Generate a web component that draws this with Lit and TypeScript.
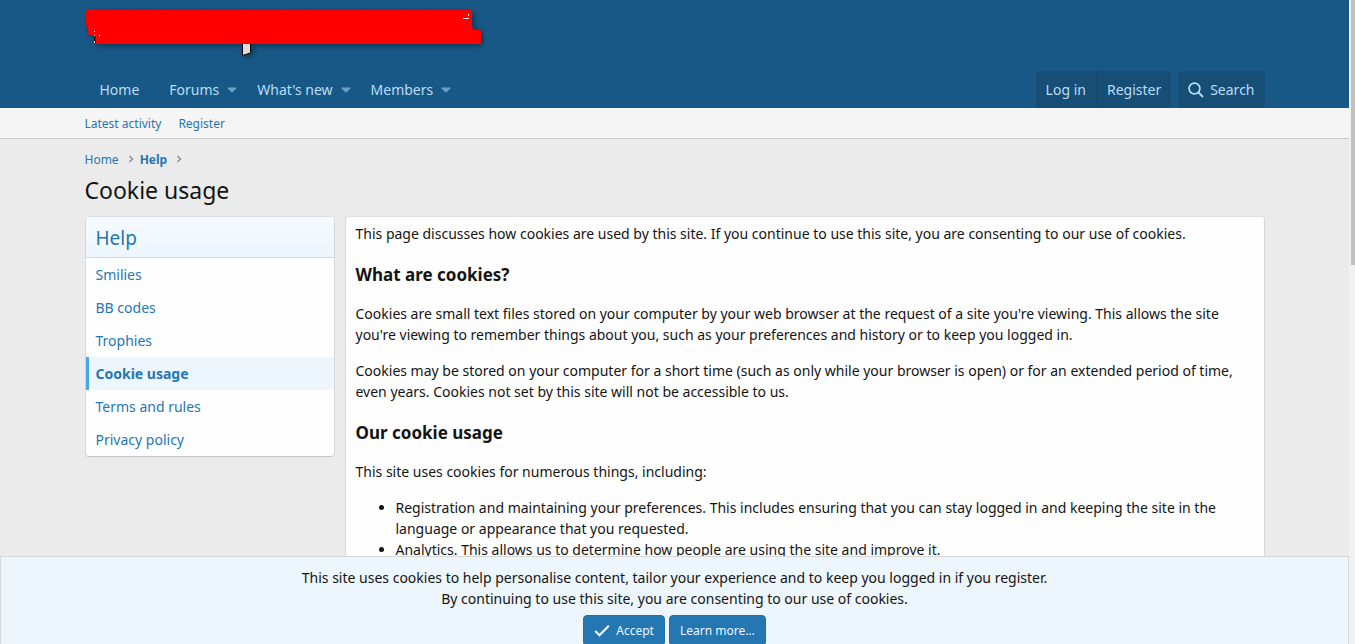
import { LitElement, html, css, svg } from "lit";
import { customElement } from "lit/decorators.js";

const chevron = svg`<svg class="chevron" viewBox="0 0 6 8" aria-hidden="true"><path d="M1.4 .9 4.6 4 1.4 7.1" fill="none" stroke="currentColor" stroke-width="1.4"/></svg>`;
const caret = svg`<svg class="caret" viewBox="0 0 10 6" aria-hidden="true"><path d="M1 .5h8a.5.5 0 0 1 .4.9L5.5 5.3a.7.7 0 0 1-1 0L.6 1.4A.5.5 0 0 1 1 .5Z" fill="currentColor"/></svg>`;

@customElement("app-root")
export class AppRoot extends LitElement {
  static styles = css`
    :host {
      display: grid;
      grid-template-columns: minmax(0, 1fr) 6px;
      height: 100vh;
      overflow: hidden;
      background: #ebebeb;
      color: #141414;
      font: 14px/21px "Segoe UI", "Noto Sans", "Open Sans", sans-serif;
    }
    * { box-sizing: border-box; }
    a { color: #2577b1; text-decoration: none; }
    a:hover { text-decoration: underline; }
    p, h1, h2, h3, ul { margin: 0; }

    .page { display: flex; flex-direction: column; min-height: 0; height: 100vh; }
    .view { flex: 1; min-height: 0; overflow: hidden; }
    .inner { max-width: 1200px; margin: 0 auto; padding: 0 10px; }

    .header { background: #185886; }
    .brand { height: 71px; padding-top: 8px; }
    .logo { display: block; width: 400px; height: 52px; }

    .nav { display: flex; align-items: flex-end; }
    .tabs { display: flex; flex: 1; padding-left: 5px; }
    .tab, .op {
      display: flex;
      align-items: center;
      height: 37px;
      color: #b8ddf6;
    }
    .tab { padding: 0 10px; }
    .tab.menu { padding-right: 0; }
    .tab.first { margin-right: 10px; }
    .tab.menu + .tab { margin-left: 5px; }
    .caret { width: 10px; height: 6px; margin: 0 5px 0 8px; color: #6a9fc4; }
    .ops { display: flex; gap: 7px; }
    .group { display: flex; border-radius: 4px 4px 0 0; background: #174e76; overflow: hidden; }
    .op { padding: 0 10px; }
    .op + .op { border-left: 1px solid #174565; }
    .glass { width: 16px; height: 16px; margin-right: 6px; }

    .subnav { background: #f5f5f5; border-bottom: 1px solid #cbcbcb; }
    .sublinks { display: flex; gap: 17px; height: 30px; align-items: center; font-size: 12px; }

    .crumbs {
      display: flex;
      align-items: center;
      height: 20px;
      margin: 10px 0 5px;
      padding: 0;
      list-style: none;
      font-size: 12px;
    }
    .crumbs li { display: flex; align-items: center; }
    .here { font-weight: 700; }
    .chevron { width: 6px; height: 8px; margin: 0 6px 0 9px; color: #8c8c8c; }
    .title { font-size: 23px; line-height: 32px; font-weight: 400; margin-bottom: 10px; }

    .columns { display: grid; grid-template-columns: 250px minmax(0, 1fr); gap: 10px; align-items: start; }
    .block {
      background: #fefefe;
      border: 1px solid #d8d8d8;
      border-top-color: #e0e0e0;
      border-bottom-color: #c5c5c5;
      border-radius: 4px;
      overflow: hidden;
    }
    .side-title {
      padding: 7px 10px 5px;
      font-size: 19px;
      line-height: 28px;
      font-weight: 400;
      color: #2577b1;
      background: linear-gradient(#f5faff, #edf6fd);
      border-bottom: 1px solid #d8d8d8;
    }
    .side-link { display: block; padding: 6px 10px; }
    .side-link.active {
      padding-left: 7px;
      border-left: 3px solid #47a7eb;
      background: #edf6fd;
      font-weight: 700;
    }

    .body { padding: 6px 10px; }
    .body p { margin-bottom: 15px; }
    .body h3 { font-size: 17px; line-height: 25px; margin: 18px 0 16px; }
    .body ul { padding-left: 40px; }

    .notice {
      flex: none;
      margin-bottom: -2px;
      padding-top: 10px;
      border: 1px solid #d8d8d8;
      border-bottom: 0;
      background: #edf6fd;
      text-align: center;
    }
    .actions { display: flex; justify-content: center; gap: 4px; margin-top: 6px; }
    .button {
      display: flex;
      align-items: center;
      height: 31px;
      padding: 0 10px;
      border: 1px solid #2070a9;
      border-radius: 4px;
      background: #2577b1;
      color: #edf6fd;
      font: inherit;
      font-size: 12px;
    }
    .check { width: 16px; height: 13px; margin-right: 6px; }

    .track { background: #f1f1f1; padding-left: 2px; }
    .thumb { height: 41.2%; background: #c1c1c1; }
  `;

  private menus = ["Forums", "What's new", "Members"];
  private topics = ["Smilies", "BB codes", "Trophies", "Cookie usage", "Terms and rules", "Privacy policy"];

  render() {
    return html`
      <div class="page">
        <div class="view">
          <header class="header">
            <div class="inner">
              <div class="brand">
                <svg class="logo" viewBox="0 0 400 52" aria-hidden="true">
                  <defs>
                    <filter id="shade" x="-5%" y="-20%" width="110%" height="150%">
                      <feDropShadow dx="2" dy="2" stdDeviation="3" flood-color="#000" flood-opacity=".4"/>
                    </filter>
                  </defs>
                  <g filter="url(#shade)">
                    <path d="M157.500 34V47.500L165.500 45V34Z" fill="#ddd" stroke="#000"/>
                    <path d="M9 27h4v8H9Z" fill="#111"/>
                    <path d="M3 2H385Q387 2 387 4V19H388V22H394Q396 22 396 24V34Q396 36 394 36H11L10 27H5Q3 27 3 25V19L1 18V4Q1 2 3 2Z" fill="#f00"/>
                  </g>
                  <path d="M378 10.500h6M383.500 6v2M9.500 33v2" stroke="#eee" fill="none"/>
                  <path d="M9 23h1v1H9ZM9 27h1v1H9ZM14 27h1v1h-1Z" fill="#fff"/>
                  <path d="M4 5.500h4M31 5.500h14M55 5.500h13M77 5.500h7M93 5.500h2M118 5.500h4M154 5.500h9M195 5.500h5M222 5.500h4M276 5.500h7M316 5.500h4M341 5.500h4M392.500 25v3" stroke="#7a1f3d"/>
                </svg>
              </div>
              <nav class="nav">
                <div class="tabs">
                  <a class="tab first" href="#">Home</a>
                  ${this.menus.map((m) => html`<a class="tab menu" href="#">${m}${caret}</a>`)}
                </div>
                <div class="ops">
                  <div class="group">
                    <a class="op" href="#">Log in</a>
                    <a class="op" href="#">Register</a>
                  </div>
                  <div class="group">
                    <a class="op" href="#">
                      <svg class="glass" viewBox="0 0 16 16" aria-hidden="true">
                        <circle cx="6.500" cy="6.500" r="5.400" fill="none" stroke="currentColor" stroke-width="1.700"/>
                        <path d="m10.400 10.400 4.600 4.600" stroke="currentColor" stroke-width="2"/>
                      </svg>Search</a>
                  </div>
                </div>
              </nav>
            </div>
          </header>
          <div class="subnav">
            <div class="inner sublinks">
              <a href="#">Latest activity</a>
              <a href="#">Register</a>
            </div>
          </div>
          <main class="inner">
            <ul class="crumbs">
              <li><a href="#">Home</a>${chevron}</li>
              <li><a class="here" href="#">Help</a>${chevron}</li>
            </ul>
            <h1 class="title">Cookie usage</h1>
            <div class="columns">
              <nav class="block">
                <h2 class="side-title">Help</h2>
                ${this.topics.map(
                  (t) => html`<a class="side-link ${t === "Cookie usage" ? "active" : ""}" href="#">${t}</a>`
                )}
              </nav>
              <article class="block body">
                <p>This page discusses how cookies are used by this site. If you continue to use this site, you are consenting to our use of cookies.</p>
                <h3>What are cookies?</h3>
                <p>Cookies are small text files stored on your computer by your web browser at the request of a site you're viewing. This allows the site you're viewing to remember things about you, such as your preferences and history or to keep you logged in.</p>
                <p>Cookies may be stored on your computer for a short time (such as only while your browser is open) or for an extended period of time, even years. Cookies not set by this site will not be accessible to us.</p>
                <h3>Our cookie usage</h3>
                <p>This site uses cookies for numerous things, including:</p>
                <ul>
                  <li>Registration and maintaining your preferences. This includes ensuring that you can stay logged in and keeping the site in the language or appearance that you requested.</li>
                  <li>Analytics. This allows us to determine how people are using the site and improve it.</li>
                </ul>
              </article>
            </div>
          </main>
        </div>
        <section class="notice" aria-label="Cookie notice">
          <p>This site uses cookies to help personalise content, tailor your experience and to keep you logged in if you register.</p>
          <p>By continuing to use this site, you are consenting to our use of cookies.</p>
          <div class="actions">
            <button class="button" type="button">
              <svg class="check" viewBox="0 0 16 13" aria-hidden="true"><path d="m1.200 7 4.300 4.300L14.800 1.800" fill="none" stroke="currentColor" stroke-width="2.200"/></svg>Accept
            </button>
            <button class="button" type="button">Learn more…</button>
          </div>
        </section>
      </div>
      <div class="track"><div class="thumb"></div></div>
    `;
  }
}
